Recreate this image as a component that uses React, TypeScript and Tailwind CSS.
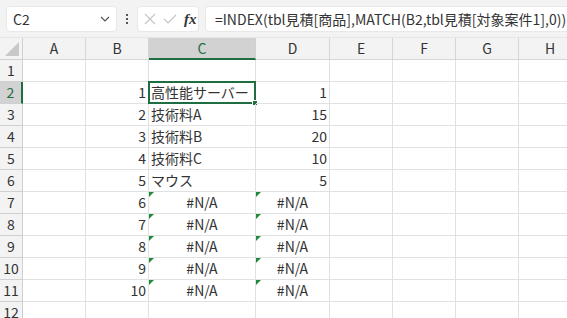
import React from 'react'

const cols = ['A', 'B', 'C', 'D', 'E', 'F', 'G', 'H']
const font = { fontFamily: '"Noto Sans CJK JP", "Noto Sans", sans-serif' }

type Cell = { text?: string; align?: 'left' | 'right' | 'center'; err?: boolean }

const items = ['高性能サーバー', '技術料A', '技術料B', '技術料C', 'マウス']
const qty = ['1', '15', '20', '10', '5']

const rowData = (r: number): Record<string, Cell> => {
  if (r >= 2 && r <= 6) {
    return {
      B: { text: String(r - 1), align: 'right' },
      C: { text: items[r - 2], align: 'left' },
      D: { text: qty[r - 2], align: 'right' },
    }
  }
  if (r >= 7 && r <= 11) {
    return {
      B: { text: String(r - 1), align: 'right' },
      C: { text: '#N/A', align: 'center', err: true },
      D: { text: '#N/A', align: 'center', err: true },
    }
  }
  return {}
}

const App: React.FC = () => {
  const rows = Array.from({ length: 12 }, (_, i) => i + 1)

  return (
    <div className="w-[567px] h-[318px] overflow-hidden bg-white text-[#333]" style={font}>
      {/* Formula bar */}
      <div className="h-[38px] bg-[#f3f3f3] flex items-start pt-[6px] pl-[6px] gap-[6px] border-b border-[#e6e6e6]">
        <div className="w-[111px] h-[26px] bg-white rounded-[4px] border border-[#e8e8e8] flex items-center justify-between pl-[6px] pr-[6px] text-[14px]">
          <span>C2</span>
          <svg width="10" height="6" viewBox="0 0 10 6" fill="none" stroke="#555" strokeWidth="1.2">
            <path d="M1 1 L5 5 L9 1" />
          </svg>
        </div>
        <div className="w-[8px] h-[26px] flex flex-col items-center justify-center gap-[2px]">
          <span className="w-[2px] h-[2px] bg-[#555]" />
          <span className="w-[2px] h-[2px] bg-[#555]" />
          <span className="w-[2px] h-[2px] bg-[#555]" />
        </div>
        <div className="w-[62px] h-[26px] bg-white rounded-[4px] border border-[#e8e8e8] flex items-center pl-[6px] gap-[7px]">
          <svg width="12" height="12" viewBox="0 0 12 12" stroke="#c4c4c4" strokeWidth="1.1">
            <path d="M1 1 L11 11 M11 1 L1 11" />
          </svg>
          <svg width="14" height="12" viewBox="0 0 14 12" fill="none" stroke="#c4c4c4" strokeWidth="1.1">
            <path d="M1 6 L5 10 L13 2" />
          </svg>
          <span className="italic font-bold text-[15px] leading-none text-[#333]" style={{ fontFamily: '"Liberation Serif", serif' }}>
            fx
          </span>
        </div>
        <div className="flex-1 h-[26px] bg-white rounded-l-[4px] border border-[#e8e8e8] border-r-0 flex items-center pl-[9px] text-[14px] whitespace-nowrap overflow-hidden">
          =INDEX(tbl見積[商品],MATCH(B2,tbl見積[対象案件1],0))
        </div>
      </div>

      {/* Grid */}
      <div className="grid grid-cols-[23px_63px_63px_107px_74px_63px_63px_63px_63px] auto-rows-[22px] w-[582px]">
        <div className="bg-[#f3f3f3] border-r border-b border-[#d0d0d0] relative">
          <div className="absolute right-[3px] bottom-[3px] w-0 h-0 border-l-[14px] border-l-transparent border-b-[14px] border-b-[#c8c8c8]" />
        </div>
        {cols.map((c) =>
          c === 'C' ? (
            <div key={c} className="bg-[#d2d2d2] border-r border-[#d0d0d0] border-b-2 border-b-[#1e6e42] flex items-center justify-center text-[14px] text-[#1e6e42]">
              {c}
            </div>
          ) : (
            <div key={c} className="bg-[#f3f3f3] border-r border-b border-[#d6d6d6] flex items-center justify-center text-[14px]">
              {c}
            </div>
          )
        )}

        {rows.map((r) => {
          const data = rowData(r)
          return (
            <React.Fragment key={r}>
              <div
                className={
                  r === 2
                    ? 'bg-[#d2d2d2] border-r-2 border-r-[#1e6e42] border-b border-b-[#d0d0d0] flex items-center justify-center text-[14px] text-[#1e6e42]'
                    : 'bg-[#f3f3f3] border-r border-b border-[#d0d0d0] flex items-center justify-center text-[14px]'
                }
              >
                {r}
              </div>
              {cols.map((c) => {
                const cell = data[c]
                const selected = r === 2 && c === 'C'
                return (
                  <div key={c} className="relative border-r border-b border-[#e1e1e1] text-[14px] flex items-center">
                    {cell?.err && (
                      <div className="absolute left-0 top-0 w-0 h-0 border-t-[5px] border-t-[#1e8a3a] border-r-[5px] border-r-transparent" />
                    )}
                    {cell?.text && (
                      <span
                        className={
                          cell.align === 'right'
                            ? 'w-full text-right pr-[2px]'
                            : cell.align === 'center'
                            ? 'w-full text-center'
                            : 'w-full text-left pl-[2px]'
                        }
                      >
                        {cell.text}
                      </span>
                    )}
                    {selected && (
                      <div className="absolute -left-[1px] -top-[1px] w-[108px] h-[23px] border-2 border-[#1e6e42]">
                        <div className="absolute -right-[4px] -bottom-[4px] w-[6px] h-[6px] bg-[#1e6e42] border border-white" />
                      </div>
                    )}
                  </div>
                )
              })}
            </React.Fragment>
          )
        })}
      </div>
    </div>
  )
}

export default App
